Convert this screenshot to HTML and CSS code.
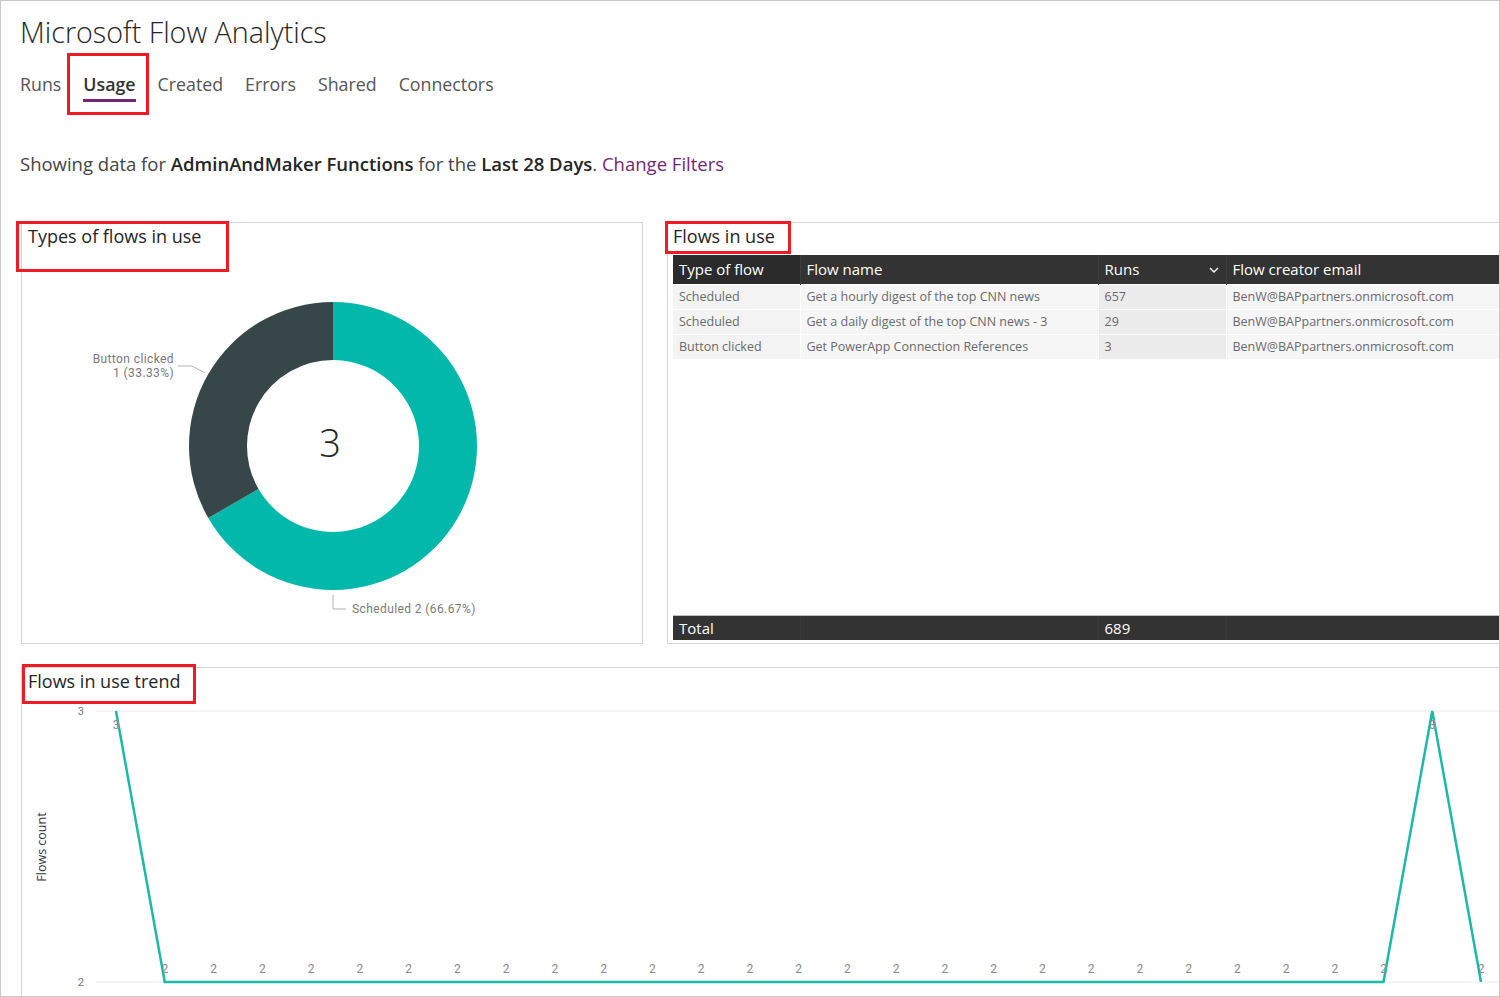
FILE: index.html
```html
<!DOCTYPE html>
<html lang="en">
<head>
<meta charset="utf-8">
<title>Microsoft Flow Analytics</title>
<link rel="stylesheet" href="styles.css">
</head>
<body>
<div class="page">
  <header class="hdr">
    <h1 class="title">Microsoft Flow Analytics</h1>
    <nav class="tabs">
      <span class="tab">Runs</span>
      <span class="tab active">Usage</span>
      <span class="tab">Created</span>
      <span class="tab">Errors</span>
      <span class="tab">Shared</span>
      <span class="tab">Connectors</span>
    </nav>
    <p class="filters">Showing data for <b>AdminAndMaker Functions</b> for the <b>Last 28 Days</b>. <a class="link">Change Filters</a></p>
  </header>

  <section class="row">
    <div class="card card-donut">
      <h2 class="card-title mark-types">Types of flows in use</h2>
      <svg class="donut" width="620" height="384" viewBox="0 0 620 384">
        <path d="M311 43 A144 144 0 1 1 186.29 259 L236.52 230 A86 86 0 1 0 311 101 Z" fill="#01b8aa"/>
        <path d="M186.29 259 A144 144 0 0 1 311 43 L311 101 A86 86 0 0 0 236.52 230 Z" fill="#374649"/>
        <text class="center-num" x="308" y="198" text-anchor="middle">3</text>
        <polyline points="156,107 170,107 183,114" fill="none" stroke="#b4b4b4" stroke-width="1"/>
        <text class="slice-label" x="152" y="104" text-anchor="end">Button clicked</text>
        <text class="slice-label" x="152" y="118" text-anchor="end">1 (33.33%)</text>
        <polyline points="311,336 311,350 324,350" fill="none" stroke="#b4b4b4" stroke-width="1"/>
        <text class="slice-label" x="330" y="354">Scheduled 2 (66.67%)</text>
      </svg>
    </div>

    <div class="card card-table">
      <h2 class="card-title mark-flows">Flows in use</h2>
      <div class="tbl">
        <table class="grid">
          <colgroup><col class="c1"><col class="c2"><col class="c3"><col class="c4"></colgroup>
          <thead>
            <tr>
              <th>Type of flow</th>
              <th>Flow name</th>
              <th class="sort">Runs<svg class="chev" width="10" height="6" viewBox="0 0 10 6"><path d="M1 1 L5 5 L9 1" fill="none" stroke="#fff" stroke-width="1.4"/></svg></th>
              <th>Flow creator email</th>
            </tr>
          </thead>
          <tbody>
            <tr><td>Scheduled</td><td>Get a hourly digest of the top CNN news</td><td class="runs">657</td><td>BenW@BAPpartners.onmicrosoft.com</td></tr>
            <tr><td>Scheduled</td><td>Get a daily digest of the top CNN news - 3</td><td class="runs">29</td><td>BenW@BAPpartners.onmicrosoft.com</td></tr>
            <tr><td>Button clicked</td><td>Get PowerApp Connection References</td><td class="runs">3</td><td>BenW@BAPpartners.onmicrosoft.com</td></tr>
          </tbody>
        </table>
        <div class="tbl-fill"></div>
        <table class="grid total">
          <colgroup><col class="c1"><col class="c2"><col class="c3"><col class="c4"></colgroup>
          <tr><td>Total</td><td></td><td>689</td><td></td></tr>
        </table>
      </div>
    </div>
  </section>

  <section class="card card-trend">
    <h2 class="card-title mark-trend">Flows in use trend</h2>
    <svg class="trend" width="1480" height="300" viewBox="0 0 1480 300">
      <line x1="74" y1="11" x2="1480" y2="11" stroke="#eaeaea" stroke-width="1"/>
      <line x1="74" y1="282" x2="1480" y2="282" stroke="#eaeaea" stroke-width="1"/>
      <text class="axis" x="62" y="15" text-anchor="end">3</text>
      <text class="axis" x="62" y="286" text-anchor="end">2</text>
      <text class="axis-title" transform="translate(24 147) rotate(-90)" text-anchor="middle">Flows count</text>
      <polyline points="94,11 142.75,282 1361.5,282 1410.25,11 1459,282" fill="none" stroke="#1cb9a9" stroke-width="2.5" stroke-linejoin="miter"/>
      <g class="dl" text-anchor="middle">
        <text x="94" y="29">3</text>
        <text x="142.75" y="273">2</text>
        <text x="191.5" y="273">2</text>
        <text x="240.25" y="273">2</text>
        <text x="289" y="273">2</text>
        <text x="337.75" y="273">2</text>
        <text x="386.5" y="273">2</text>
        <text x="435.25" y="273">2</text>
        <text x="484" y="273">2</text>
        <text x="532.75" y="273">2</text>
        <text x="581.5" y="273">2</text>
        <text x="630.25" y="273">2</text>
        <text x="679" y="273">2</text>
        <text x="727.75" y="273">2</text>
        <text x="776.5" y="273">2</text>
        <text x="825.25" y="273">2</text>
        <text x="874" y="273">2</text>
        <text x="922.75" y="273">2</text>
        <text x="971.5" y="273">2</text>
        <text x="1020.25" y="273">2</text>
        <text x="1069" y="273">2</text>
        <text x="1117.75" y="273">2</text>
        <text x="1166.5" y="273">2</text>
        <text x="1215.25" y="273">2</text>
        <text x="1264" y="273">2</text>
        <text x="1312.75" y="273">2</text>
        <text x="1361.5" y="273">2</text>
        <text x="1410.25" y="29">3</text>
        <text x="1459" y="273">2</text>
      </g>
    </svg>
  </section>
</div>
</body>
</html>
```

FILE: styles.css
```css
*, *::before, *::after { box-sizing: border-box; }

html, body {
  margin: 0;
  padding: 0;
  background: #fff;
}

body {
  font-family: "Open Sans", "Noto Sans", sans-serif;
  color: #333;
}

.page {
  width: 1500px;
  height: 997px;
  border: 1px solid #c8c8c8;
  overflow: hidden;
  position: relative;
  background: #fff;
}

.hdr {
  padding: 11px 0 0 19px;
}

.title {
  margin: 0;
  font-size: 28.7px;
  font-weight: 300;
  line-height: 40px;
  color: #252525;
}

.tabs {
  display: flex;
  align-items: flex-start;
  gap: 22px;
  margin-top: 17px;
  height: 33px;
}

.tab {
  font-size: 17.8px;
  line-height: 30px;
  color: #555;
  position: relative;
}

.tab.active {
  color: #333;
  font-weight: 600;
  border-bottom: 3px solid #742774;
}

.tab.active::after {
  content: "";
  position: absolute;
  left: -16px;
  top: -16px;
  width: 82px;
  height: 62px;
  border: 3px solid #ed1c24;
}

.filters {
  margin: 47px 0 0 0;
  font-size: 18.5px;
  line-height: 30px;
  color: #444;
}

.filters b {
  color: #252525;
  font-weight: 600;
}

.link {
  color: #742774;
}

.row {
  display: flex;
  gap: 24px;
  margin-top: 43px;
  padding-left: 20px;
}

.card {
  border: 1px solid #d6d6d6;
  background: #fff;
  flex: none;
}

.card-donut {
  width: 622px;
  height: 422px;
}

.card-table {
  width: 900px;
  height: 422px;
}

.card-trend {
  margin: 23px 0 0 20px;
  width: 1500px;
  height: 340px;
}

.card-title {
  margin: 0;
  position: relative;
  font-size: 18px;
  font-weight: 400;
  line-height: 26px;
  color: #252525;
}

.card-title::after {
  content: "";
  position: absolute;
  border: 3px solid #ed1c24;
}

.mark-types {
  padding: 0 0 10px 6px;
}

.mark-types::after {
  left: -6px;
  top: -2px;
  width: 213px;
  height: 51px;
}

.mark-flows {
  padding: 0 0 6px 5px;
}

.mark-flows::after {
  left: -3px;
  top: -2px;
  width: 126px;
  height: 33px;
}

.mark-trend {
  padding: 0 0 6px 6px;
}

.mark-trend::after {
  left: 0;
  top: -4px;
  width: 174px;
  height: 40px;
}

.donut, .trend {
  display: block;
}

.center-num {
  font-family: "Open Sans", sans-serif;
  font-weight: 300;
  font-size: 38px;
  fill: #252525;
}

.slice-label {
  font-family: "Roboto", sans-serif;
  font-size: 12px;
  letter-spacing: 0.4px;
  fill: #7a7a7a;
}

.tbl {
  margin-left: 5px;
  height: 385px;
  display: flex;
  flex-direction: column;
}

.tbl-fill {
  flex: 1;
}

.grid {
  border-collapse: collapse;
  table-layout: fixed;
  width: 880px;
}

.c1 { width: 127px; }
.c2 { width: 298px; }
.c3 { width: 128px; }
.c4 { width: 327px; }

.grid th {
  height: 29px;
  padding: 0 6px;
  background: #333;
  color: #fff;
  font-size: 15px;
  font-weight: 400;
  text-align: left;
  border-left: 1px solid #3e3e3e;
  white-space: nowrap;
}

.grid th:first-child {
  background: #2b2b2b;
  border-left: none;
}

.grid th.sort {
  position: relative;
}

.chev {
  position: absolute;
  right: 7px;
  top: 12px;
}

.grid td {
  height: 25px;
  padding: 0 6px;
  background: #f6f6f6;
  color: #6a6a6a;
  font-size: 12.5px;
  border-top: 1px solid #fff;
  border-left: 1px solid #fff;
  white-space: nowrap;
  overflow: hidden;
}

.grid td:first-child {
  border-left: none;
  background: #f3f3f3;
}

.grid td.runs {
  background: #ececec;
}

.total td {
  height: 25px;
  background: #333;
  color: #fff;
  font-size: 15px;
  border-top: 1px solid #bdbdbd;
  border-left: 1px solid #3a3a3a;
}

.total td:first-child {
  background: #333;
}

.axis {
  font-family: "Roboto", sans-serif;
  font-size: 11px;
  fill: #777;
}

.axis-title {
  font-family: "Open Sans", sans-serif;
  font-size: 12.5px;
  fill: #333;
}

.dl text {
  font-family: "Roboto", sans-serif;
  font-size: 12px;
  fill: #8a8a8a;
}
```
